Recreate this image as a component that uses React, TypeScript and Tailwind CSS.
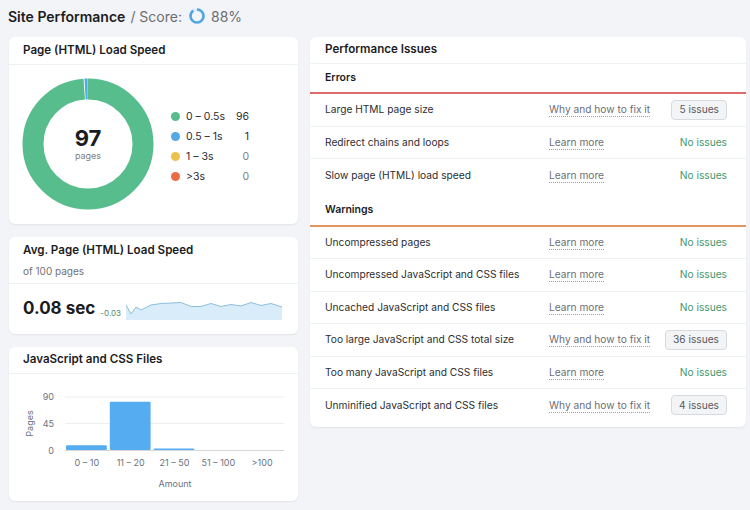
import React from "react";

const font = { fontFamily: "Inter, 'Noto Sans', 'Liberation Sans', sans-serif" };

function ScoreRing() {
  const r = 6.5;
  const c = 2 * Math.PI * r;
  return (
    <svg width="18" height="18" viewBox="0 0 18 18" className="ml-[6px] mr-[5px]">
      <circle cx="9" cy="9" r={r} fill="none" stroke="#dcebf7" strokeWidth="2.6" />
      <circle
        cx="9"
        cy="9"
        r={r}
        fill="none"
        stroke="#4fa7e2"
        strokeWidth="2.6"
        strokeDasharray={`${c * 0.88} ${c}`}
        transform="rotate(-90 9 9)"
      />
    </svg>
  );
}

function Donut() {
  const R = 55;
  const c = 2 * Math.PI * R;
  const green = (96 / 97) * c;
  const blue = (1 / 97) * c;
  return (
    <svg width="132" height="132" viewBox="0 0 132 132">
      <g transform="rotate(-90 66 66)">
        <circle cx="66" cy="66" r={R} fill="none" stroke="#58bd8c" strokeWidth="21" strokeDasharray={`${green - 0.8} ${c}`} />
        <circle
          cx="66"
          cy="66"
          r={R}
          fill="none"
          stroke="#55a8e6"
          strokeWidth="21"
          strokeDasharray={`${blue - 0.9} ${c}`}
          strokeDashoffset={-green}
        />
      </g>
    </svg>
  );
}

const legend = [
  { color: "bg-[#58bd8c]", label: "0 – 0.5s", value: "96", dim: false },
  { color: "bg-[#55a8e6]", label: "0.5 – 1s", value: "1", dim: false },
  { color: "bg-[#ebc24f]", label: "1 – 3s", value: "0", dim: true },
  { color: "bg-[#ea6c46]", label: ">3s", value: "0", dim: true },
];

function Sparkline() {
  const pts: [number, number][] = [
    [0, 4], [5, 13], [10, 6], [15, 9], [25, 4], [35, 2.5], [55, 1.5], [65, 5.5], [75, 5.5], [85, 2.5],
    [95, 5.5], [105, 3.5], [115, 5], [125, 1.5], [135, 4.5], [145, 2.5], [156, 6],
  ];
  const line = pts.map((p, i) => `${i === 0 ? "M" : "L"}${p[0]} ${p[1]}`).join(" ");
  const area = `${line} L156 19 L0 19 Z`;
  return (
    <svg width="156" height="19" viewBox="0 0 156 19">
      <path d={area} fill="#d8ecfa" />
      <path d={line} fill="none" stroke="#8cbfdc" strokeWidth="1" />
    </svg>
  );
}

function BarChart() {
  const x0 = 56;
  const slot = 43.8;
  const base = 76;
  const scale = 53 / 90;
  const vals = [8, 82, 2.5, 0, 0];
  const labels = ["0 – 10", "11 – 20", "21 – 50", "51 – 100", ">100"];
  const txt = { fontFamily: "Inter, 'Liberation Sans', sans-serif", fontSize: 9, fill: "#6b7280" };
  return (
    <svg width="289" height="126" viewBox="0 0 289 126">
      <line x1={x0} x2={275} y1={23} y2={23} stroke="#eceef1" />
      <line x1={x0} x2={275} y1={49.5} y2={49.5} stroke="#eceef1" />
      {vals.map((v, i) =>
        v > 0 ? (
          <rect key={i} x={x0 + i * slot + 1} y={base - v * scale} width={slot - 3} height={v * scale} fill="#56acf0" rx="1" />
        ) : null
      )}
      <line x1={x0} x2={275} y1={base + 0.5} y2={base + 0.5} stroke="#d4d7dc" />
      <text x={45} y={25.5} textAnchor="end" style={txt}>90</text>
      <text x={45} y={52.5} textAnchor="end" style={txt}>45</text>
      <text x={45} y={79.5} textAnchor="end" style={txt}>0</text>
      <text x={24} y={49.5} textAnchor="middle" transform="rotate(-90 24 49.5)" style={txt}>Pages</text>
      {labels.map((l, i) => (
        <text key={l} x={x0 + i * slot + slot / 2} y={92} textAnchor="middle" style={txt}>{l}</text>
      ))}
      <text x={166} y={113} textAnchor="middle" style={txt}>Amount</text>
    </svg>
  );
}

type Row = { name: string; fix: boolean; issues?: string };

const errors: Row[] = [
  { name: "Large HTML page size", fix: true, issues: "5 issues" },
  { name: "Redirect chains and loops", fix: false },
  { name: "Slow page (HTML) load speed", fix: false },
];

const warnings: Row[] = [
  { name: "Uncompressed pages", fix: false },
  { name: "Uncompressed JavaScript and CSS files", fix: false },
  { name: "Uncached JavaScript and CSS files", fix: false },
  { name: "Too large JavaScript and CSS total size", fix: true, issues: "36 issues" },
  { name: "Too many JavaScript and CSS files", fix: false },
  { name: "Unminified JavaScript and CSS files", fix: true, issues: "4 issues" },
];

function IssueRow({ row, last }: { row: Row; last?: boolean }) {
  return (
    <div className={`flex h-[32.5px] items-center pl-[15px] pr-[19px] text-[10.2px] ${last ? "" : "border-b border-[#f0f1f4]"}`}>
      <div className="w-[224px] text-[#2b2d31]">{row.name}</div>
      <div className="flex-1">
        <span className="text-[#6b6f76] border-b border-dotted border-[#9aa0a8] leading-[13px] inline-block">
          {row.fix ? "Why and how to fix it" : "Learn more"}
        </span>
      </div>
      {row.issues ? (
        <span className="h-[20px] px-[7px] flex items-center rounded-[4px] border border-[#d6d9de] bg-[#f3f4f6] text-[#55585e]">
          {row.issues}
        </span>
      ) : (
        <span className="text-[#3f9670]">No issues</span>
      )}
    </div>
  );
}

const card = "bg-white rounded-[6px] shadow-[0_1px_2px_rgba(0,0,0,0.07)]";

export default function App() {
  return (
    <div style={font} className="w-[750px] h-[510px] bg-[#f3f4f8] overflow-hidden">
      <div className="h-[37px] flex items-center pl-[8px] pb-[5px] text-[14px]">
        <span className="font-semibold text-[#1b1c1f]">Site Performance</span>
        <span className="text-[#6c6e73] ml-[5px]">/ Score:</span>
        <ScoreRing />
        <span className="text-[#6c6e73]">88%</span>
      </div>
      <div className="flex pl-[9px] gap-[12px]">
        <div className="w-[289px] flex flex-col gap-[13px]">
          <div className={`${card} h-[187px] flex flex-col`}>
            <div className="h-[28px] flex items-center px-[14px] text-[11.6px] font-semibold text-[#1b1c1f] border-b border-[#eef0f3]">
              Page (HTML) Load Speed
            </div>
            <div className="flex items-start pl-[13px] pt-[13px]">
              <div className="relative w-[132px] h-[132px] shrink-0">
                <Donut />
                <div className="absolute inset-0 flex flex-col items-center justify-center">
                  <div className="text-[22px] font-bold text-[#1b1c1f] leading-[20px]">97</div>
                  <div className="text-[9px] text-[#7b7e84] leading-[11px] mt-[2px]">pages</div>
                </div>
              </div>
              <div className="ml-[17px] mt-[31px] flex flex-col gap-[5px] text-[10.5px]">
                {legend.map((l) => (
                  <div key={l.label} className="flex items-center h-[15px]">
                    <span className={`w-[9px] h-[9px] rounded-full ${l.color}`} />
                    <span className="ml-[6px] w-[48px] text-[#2b2d31]">{l.label}</span>
                    <span className={`w-[15px] text-right ${l.dim ? "text-[#7b7e84]" : "text-[#2b2d31]"}`}>{l.value}</span>
                  </div>
                ))}
              </div>
            </div>
          </div>

          <div className={`${card} h-[97px] flex flex-col`}>
            <div className="px-[14px] pt-[5px] pb-[5px] border-b border-[#eef0f3]">
              <div className="text-[11.6px] font-semibold text-[#1b1c1f] leading-[16px]">Avg. Page (HTML) Load Speed</div>
              <div className="text-[10px] text-[#6f7277] leading-[14px] mt-[6px]">of 100 pages</div>
            </div>
            <div className="flex-1 flex items-center px-[14px] whitespace-nowrap">
              <span className="text-[17px] font-bold text-[#1b1c1f] shrink-0">0.08 sec</span>
              <span className="text-[8px] text-[#4f8c70] ml-[5px] mt-[8px] shrink-0">-0.03</span>
              <div className="ml-[5px] mt-[2px] shrink-0">
                <Sparkline />
              </div>
            </div>
          </div>

          <div className={`${card} h-[154px] flex flex-col`}>
            <div className="h-[27px] flex items-center px-[14px] text-[11.6px] font-semibold text-[#1b1c1f] border-b border-[#eef0f3]">
              JavaScript and CSS Files
            </div>
            <BarChart />
          </div>
        </div>

        <div className={`${card} w-[436px] h-[390px] flex flex-col`}>
          <div className="h-[27px] flex items-center px-[15px] text-[11.6px] font-semibold text-[#1b1c1f] border-b border-[#eef0f3]">
            Performance Issues
          </div>
          <div className="h-[28px] flex items-center px-[15px] text-[10.5px] font-semibold text-[#1b1c1f]">Errors</div>
          <div className="h-[2px] bg-[#dc6b6b]" />
          {errors.map((r, i) => (
            <IssueRow key={r.name} row={r} last={i === errors.length - 1} />
          ))}
          <div className="h-[33px] flex items-center pt-[3px] px-[15px] text-[10.5px] font-semibold text-[#1b1c1f]">Warnings</div>
          <div className="h-[2px] bg-[#e39460]" />
          {warnings.map((r, i) => (
            <IssueRow key={r.name} row={r} last={i === warnings.length - 1} />
          ))}
        </div>
      </div>
    </div>
  );
}
